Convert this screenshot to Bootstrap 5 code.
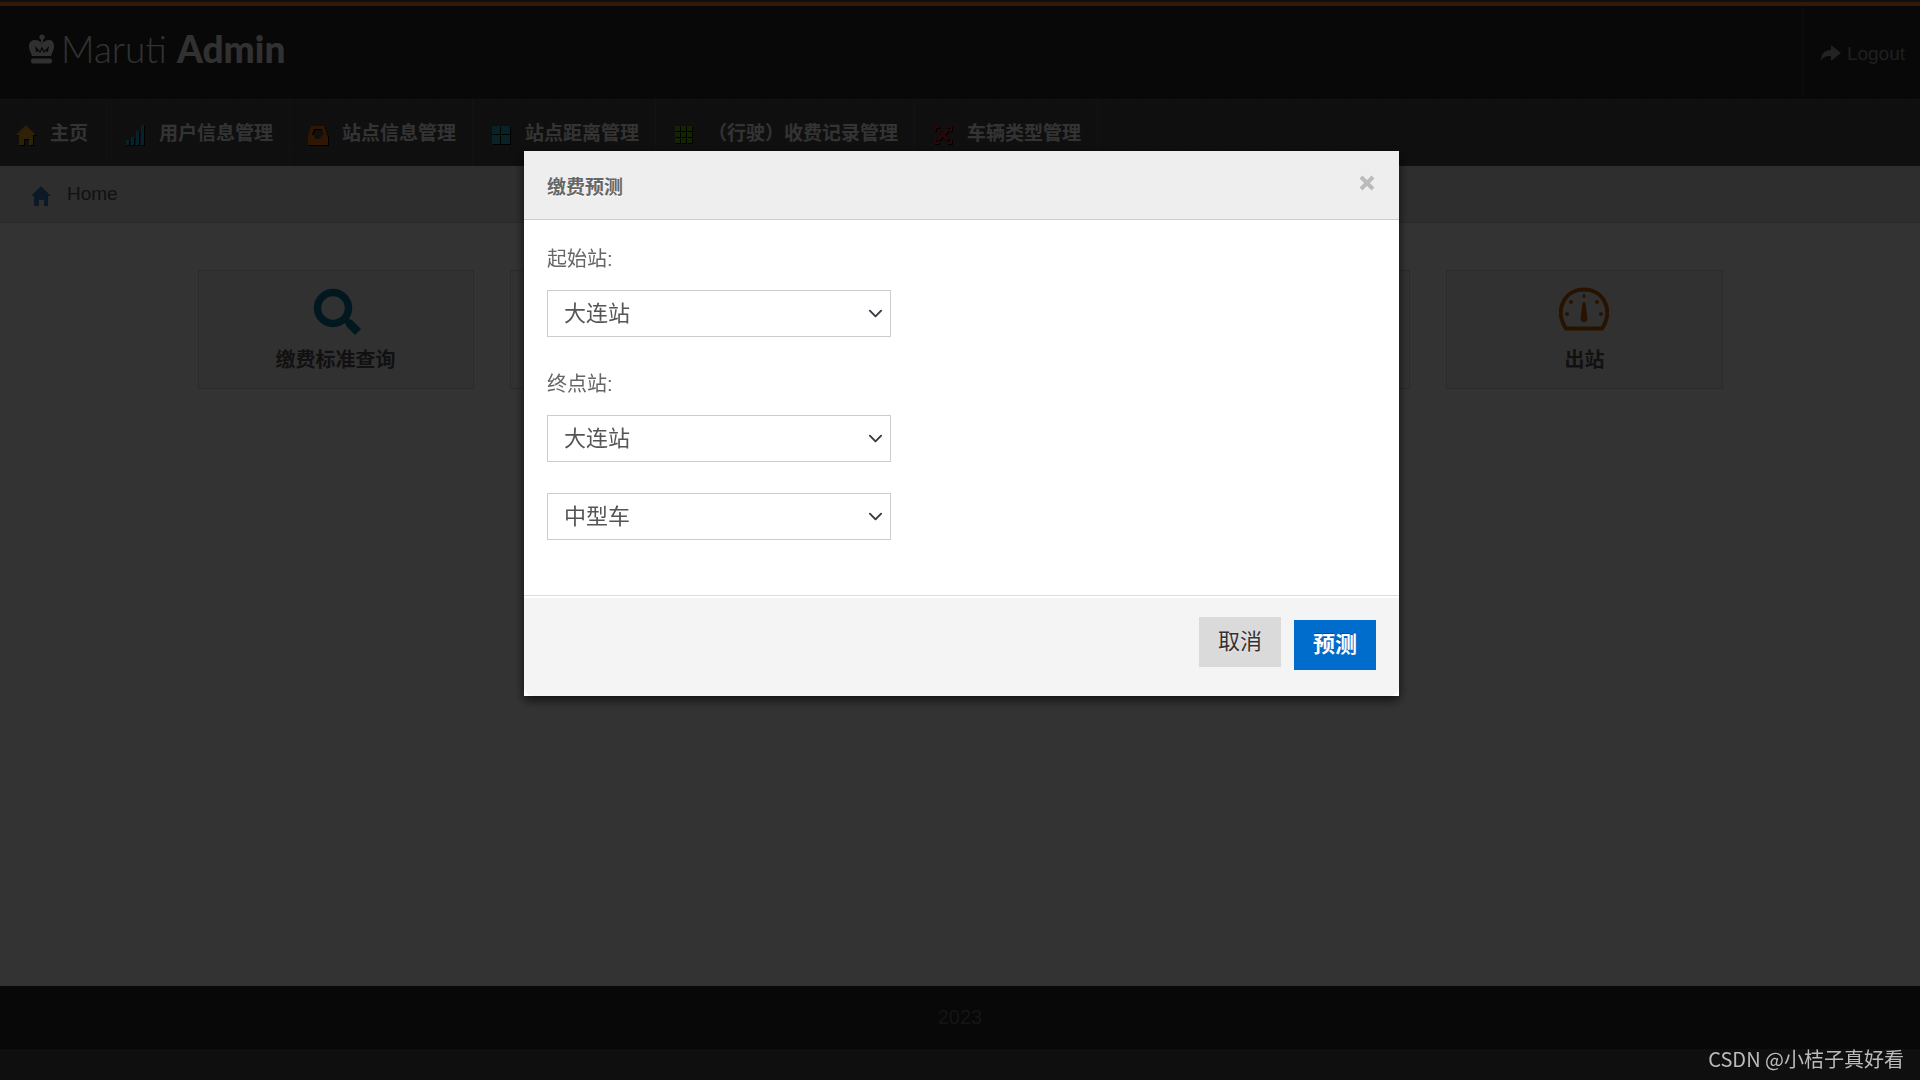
<!DOCTYPE html>
<html lang="zh-CN">
<head>
<meta charset="utf-8">
<meta name="viewport" content="width=device-width, initial-scale=1">
<title>Maruti Admin</title>
<link href="https://cdn.jsdelivr.net/npm/bootstrap@5.3.0/dist/css/bootstrap.min.css" rel="stylesheet">
<style>
  :root { --weave: #4a4a4a; }
  body {
    font-family: "Liberation Sans", "Noto Sans CJK SC", sans-serif;
    font-size: 19px; line-height: 30px; color: #666;
    background-color: var(--weave);
  }
  .weave {
    background-color: var(--weave);
    background-image:
      repeating-linear-gradient(0deg, rgba(255,255,255,.03) 0 1px, transparent 1px 7px),
      repeating-linear-gradient(90deg, rgba(255,255,255,.03) 0 1px, transparent 1px 11px);
  }
  .site-top { background: #282828; border-top: 4px solid #ff7c24; height: 97px; margin-top: 2px; }
  .brand-link { color: #f4f4f4; text-decoration: none; font: 300 37px/48px Lato, sans-serif; padding: 19px 0 0 28px; gap: 6px; }
  .brand-link svg { margin-top: 9px; }
  .brand-link b { font-weight: 900; }
  .logout-link { color: #999; text-decoration: none; border-left: 1px solid #444; padding: 2px 15px 0 17px; gap: 6px; }
  .main-nav { border-top: 1px solid #5c5c5c; }
  .main-nav a {
    display: flex; align-items: center; gap: 14px; color: #fff; font-weight: 700;
    text-decoration: none; padding: 19px 16px 17px 18px; border-right: 1px dotted #686868;
    white-space: nowrap;
  }
  .main-nav a:first-child { padding-left: 16px; padding-right: 18px; }
  .main-nav svg { filter: drop-shadow(1px 1px 0 #000); margin-top: 2px; }
  .crumbs { background: #e3e3e3; border-bottom: 1px solid #d2d2d2; padding: 13px 30px; height: 57px; }
  .crumbs a { color: #555; text-decoration: none; gap: 15px; }
  .tiles { width: 80%; max-width: 1525px; gap: 36px; padding-top: 47px; }
  .tile {
    flex: 1 1 0; height: 119px; background: #f6f6f6; border: 1px solid #d5d5d5;
    color: #555; font-size: 20px; font-weight: 700; text-decoration: none; padding-top: 14px;
  }
  .page-foot { background: #282828; color: #666; font-size: 20px; height: 63px; padding-top: 16px; }
  .under-foot { height: 31px; }
  .modal-backdrop { --bs-backdrop-opacity: .8; }
  .fee-modal { padding-left: 3px; }
  .fee-dialog { max-width: 875px; margin-top: 151px; }
  .fee-dialog .modal-content { border: 0; border-radius: 0; box-shadow: 0 4px 10px rgba(0,0,0,.7); color: #555; }
  .fee-dialog .modal-header { background: #eee; border-bottom: 1px solid #ccc; border-radius: 0; height: 69px; padding: 5px 23px 0; }
  .fee-dialog .modal-title { font-size: 19px; font-weight: 700; line-height: 30px; color: #666; text-shadow: 0 1px 0 #fff; }
  .close-x { border: 0; background: none; color: #bbb; line-height: 1; padding: 0; margin: 0 1px 12px 0; }
  .fee-dialog .modal-body { padding: 24px 23px 55px; }
  .field-label { display: block; font-size: 20px; line-height: 30px; color: #666; margin-bottom: 16px; }
  .fee-select {
    width: 344px; height: 47px; border: 1px solid #ccc; border-radius: 0; color: #555;
    font-size: 22px; line-height: 30px; padding: 8px 36px 7px 16px; margin-bottom: 32px; display: block;
    background-position: right 7px center; background-size: 15px 15px;
  }
  .fee-select.gap-after { margin-bottom: 31px; }
  .fee-select.last { margin-bottom: 0; }
  .fee-dialog .modal-footer {
    background: #f4f4f4; border-top: 1px solid #ddd; box-shadow: inset 0 2px 0 #fff;
    border-radius: 0 0 9px 9px; padding: 21px 23px 26px; gap: 13px; align-items: flex-start;
  }
  .fee-btn { margin: 0; border: 0; border-radius: 0; font-size: 22px; line-height: 30px; height: 50px; padding: 10px 19px; }
  .fee-cancel, .fee-cancel:hover { background: #dadada; color: #333; text-shadow: 0 1px 1px rgba(255,255,255,.75); }
  .fee-ok, .fee-ok:hover { background: #006dcc; color: #fff; font-weight: 700; text-shadow: 0 -1px 0 rgba(0,0,0,.25); margin-top: 3px; }
  .credit-mark {
    position: fixed; right: 16px; bottom: 6px; z-index: 1080; color: #bbb;
    font: 20px/30px "Noto Sans CJK SC", sans-serif;
  }
</style>
<script src="https://cdn.jsdelivr.net/npm/bootstrap@5.3.0/dist/js/bootstrap.bundle.min.js"></script>
</head>
<body class="modal-open overflow-hidden">
<div class="d-flex flex-column min-vh-100 weave">
  <header class="site-top d-flex justify-content-between">
    <a class="brand-link d-flex align-items-start" href="#">
      <svg width="27" height="30" viewBox="0 0 27 30" fill="#eee" aria-hidden="true"><circle cx="14" cy="3" r="2.600"/><path d="M13 4h2v5h-2zM4 22C2 17 1 15 1 12c0-4 3-6 6-6 3 0 5 1 7 4 2-3 4-4 7-4 3 0 5 2 5 6 0 3-1 5-3 10z"/><rect x="3" y="24.500" width="21" height="5" rx="2"/><path d="M9 18 8 14l4 4 2-4 2 4 4-4-1 4" fill="none" stroke="#282828" stroke-width="1.300"/></svg>
      <span>Maruti <b>Admin</b></span>
    </a>
    <a class="logout-link d-flex align-items-center" href="#">
      <svg width="21" height="18" viewBox="0 0 21 18" fill="#aaa" aria-hidden="true"><path d="M11 0l10 8-10 8v-5c-5-.5-8 1-10 5 0-7 3-10.500 10-11z"/></svg>
      Logout
    </a>
  </header>
  <nav class="main-nav d-flex weave" aria-label="主菜单">
    <a href="#"><svg width="20" height="20" viewBox="0 0 20 20" fill="#f0a11f"><path d="M10 0l10 10h-3v10h-4v-6H8v6H3V10H0z"/></svg>主页</a>
    <a href="#"><svg width="20" height="20" viewBox="0 0 20 20" fill="#1fa8d2"><path d="M1 15h3v5H1zM6 12h3v8H6zM11 6h3v14h-3zM16 0h3v20h-3z"/></svg>用户信息管理</a>
    <a href="#"><svg width="20" height="20" viewBox="0 0 20 20" fill="#f5700f" fill-rule="evenodd"><path d="M3 1h13l4 11v8H0v-8zM6 4l-2 6h2l2 4h4l2-4h2l-2-6z"/></svg>站点信息管理</a>
    <a href="#"><svg width="20" height="20" viewBox="0 0 20 20" fill="#2bacbd"><path d="M1 1h8v8H1zM10 1h9v8h-9zM1 10h8v9H1zM10 10h9v9h-9z"/></svg>站点距离管理</a>
    <a href="#"><svg width="20" height="20" viewBox="0 0 20 20" fill="#64ad0d"><path d="M1 1h5v5H1zM7 1h5v5H7zM13 1h5v5h-5zM1 7h5v5H1zM7 7h5v5H7zM13 7h5v5h-5zM1 13h5v5H1zM7 13h5v5H7zM13 13h5v5h-5z"/></svg>（行驶）收费记录管理</a>
    <a href="#"><svg width="20" height="20" viewBox="0 0 20 20" fill="#cf1f1f"><path d="M1 1h5v2H3v3H1zM19 1h-5v2h3v3h2zM1 19h5v-2H3v-3H1zM19 19h-5v-2h3v-3h2zM6 4l4 4 4-4 2 2-4 4 4 4-2 2-4-4-4 4-2-2 4-4-4-4z"/></svg>车辆类型管理</a>
  </nav>
  <div class="crumbs">
    <a class="d-inline-flex align-items-center" href="#"><svg width="22" height="20" viewBox="0 0 20 20" fill="#3f82c8" class="mt-1"><path d="M10 0l10 10h-3v10h-4v-6H8v6H3V10H0z"/></svg>Home</a>
  </div>
  <main class="flex-grow-1 bg-white">
    <div class="tiles d-flex mx-auto">
      <a class="tile d-flex flex-column align-items-center" href="#">
        <svg width="50" height="60" viewBox="0 0 50 60" fill="none" aria-hidden="true"><circle cx="22" cy="23" r="15.500" stroke="#0a789b" stroke-width="7.500"/><path d="M32 34l3-2 3 2 3 1 9 9-6 6-8-8-2-4z" fill="#0a789b"/></svg>
        缴费标准查询
      </a>
      <div class="tile"></div>
      <div class="tile"></div>
      <div class="tile"></div>
      <a class="tile d-flex flex-column align-items-center" href="#">
        <svg width="50" height="60" viewBox="0 0 50 60" fill="none" aria-hidden="true"><path d="M7 43.500C-5 26 5 4.500 25 4.500S55 26 43 43.500z" stroke="#c95b00" stroke-width="4" stroke-linejoin="round"/><path d="M23.500 18q1.500-2 3 0l2 16q-.5 3-3.500 3t-3.500-3z" fill="#c95b00"/><g fill="#c95b00"><ellipse cx="25" cy="11" rx="1.500" ry="2"/><circle cx="12" cy="17" r="2"/><circle cx="38" cy="17" r="2"/><circle cx="8" cy="29" r="2"/><circle cx="42" cy="29" r="2"/></g></svg>
        出站
      </a>
    </div>
  </main>
  <footer class="page-foot text-center">2023</footer>
  <div class="under-foot weave"></div>
</div>

<div class="modal-backdrop show"></div>
<div class="modal d-block fee-modal" tabindex="-1" role="dialog" aria-modal="true" aria-labelledby="feeTitle">
  <div class="modal-dialog fee-dialog">
    <form class="modal-content">
      <div class="modal-header">
        <h3 class="modal-title" id="feeTitle">缴费预测</h3>
        <button type="button" class="close-x" aria-label="关闭"><svg width="16" height="16" viewBox="0 0 16 16"><path d="M2 2l12 12M14 2L2 14" stroke="#bbb" stroke-width="4"/></svg></button>
      </div>
      <div class="modal-body">
        <label class="field-label" for="fromStation">起始站:</label>
        <select class="form-select fee-select" id="fromStation"><option>大连站</option></select>
        <label class="field-label" for="toStation">终点站:</label>
        <select class="form-select fee-select gap-after" id="toStation"><option>大连站</option></select>
        <select class="form-select fee-select last" id="carType" aria-label="车辆类型"><option>中型车</option></select>
      </div>
      <div class="modal-footer">
        <button type="button" class="btn fee-btn fee-cancel">取消</button>
        <button type="button" class="btn fee-btn fee-ok">预测</button>
      </div>
    </form>
  </div>
</div>
<div class="credit-mark">CSDN @小桔子真好看</div>
</body>
</html>
